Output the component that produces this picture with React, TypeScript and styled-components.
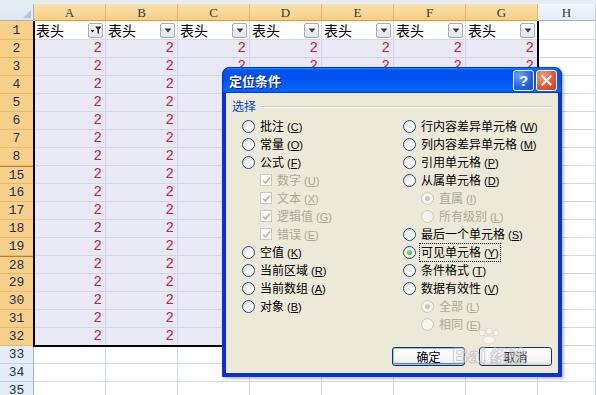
import React from 'react'
import styled, { createGlobalStyle, css } from 'styled-components'

const GlobalStyle = createGlobalStyle`
  html, body { margin: 0; padding: 0; background: #fff; overflow: hidden; }
`

const ROWS = [1, 2, 3, 4, 5, 6, 7, 8, 15, 16, 17, 18, 19, 28, 29, 30, 31, 32, 33, 34, 35]
const COLS = ['A', 'B', 'C', 'D', 'E', 'F', 'G']

const leftItems = [
  { kind: 'radio', label: '批注', key: 'C' },
  { kind: 'radio', label: '常量', key: 'O' },
  { kind: 'radio', label: '公式', key: 'F' },
  { kind: 'check', label: '数字', key: 'U', sub: true },
  { kind: 'check', label: '文本', key: 'X', sub: true },
  { kind: 'check', label: '逻辑值', key: 'G', sub: true },
  { kind: 'check', label: '错误', key: 'E', sub: true },
  { kind: 'radio', label: '空值', key: 'K' },
  { kind: 'radio', label: '当前区域', key: 'R' },
  { kind: 'radio', label: '当前数组', key: 'A' },
  { kind: 'radio', label: '对象', key: 'B' },
]

const rightItems = [
  { kind: 'radio', label: '行内容差异单元格', key: 'W' },
  { kind: 'radio', label: '列内容差异单元格', key: 'M' },
  { kind: 'radio', label: '引用单元格', key: 'P' },
  { kind: 'radio', label: '从属单元格', key: 'D' },
  { kind: 'radio', label: '直属', key: 'I', sub: true, dot: true },
  { kind: 'radio', label: '所有级别', key: 'L', sub: true },
  { kind: 'radio', label: '最后一个单元格', key: 'S' },
  { kind: 'radio', label: '可见单元格', key: 'Y', checked: true },
  { kind: 'radio', label: '条件格式', key: 'T' },
  { kind: 'radio', label: '数据有效性', key: 'V' },
  { kind: 'radio', label: '全部', key: 'L', sub: true, dot: true },
  { kind: 'radio', label: '相同', key: 'E', sub: true },
]

type Item = { kind: string; label: string; key: string; sub?: boolean; dot?: boolean; checked?: boolean }

const App = () => {
  return (
    <Sheet>
      <GlobalStyle />
      <Strip />
      <Grid>
        <Corner $r={1} $c={1}>
          <svg width="8" height="8" viewBox="0 0 8 8">
            <path d="M8 0 L8 8 L0 8 Z" fill="#b6c5d8" />
          </svg>
        </Corner>
        {COLS.map((c, i) => (
          <ColHead key={c} $r={1} $c={i + 2} $selected>{c}</ColHead>
        ))}
        <ColHead $r={1} $c={9}>H</ColHead>

        {ROWS.map((r, ri) => {
          const sel = r <= 32
          const gr = ri + 2
          return (
            <React.Fragment key={r}>
              <RowHead $r={gr} $c={1} $selected={sel} $gap={r === 15 || r === 28}>{r}</RowHead>
              {COLS.map((c, i) =>
                r === 1 ? (
                  <TitleCell key={c} $r={gr} $c={i + 2}>
                    <span>表头</span>
                    <DropButton>
                      {i === 0 ? (
                        <svg width="12" height="10" viewBox="0 0 12 10">
                          <path d="M0.5 5 L4.5 5 L2.5 7.5 Z" fill="#222" />
                          <path d="M5 1.5 L11.5 1.5 L9 4.5 L9 9 L7.5 8 L7.5 4.5 Z" fill="#222" />
                        </svg>
                      ) : (
                        <svg width="8" height="5" viewBox="0 0 8 5">
                          <path d="M0.5 0.5 L7.5 0.5 L4 4.5 Z" fill="#2a3a5a" />
                        </svg>
                      )}
                    </DropButton>
                  </TitleCell>
                ) : (
                  <Cell key={c} $r={gr} $c={i + 2} $selected={sel}>{sel ? '2' : ''}</Cell>
                )
              )}
              <Cell $r={gr} $c={9} />
            </React.Fragment>
          )
        })}
        <Selection />
      </Grid>

      <Dialog>
        <TitleBar>
          <Title>定位条件</Title>
          <CaptionButton $tone="help">?</CaptionButton>
          <CaptionButton $tone="close">
            <svg width="11" height="11" viewBox="0 0 11 11">
              <path d="M1.5 1.5 L9.5 9.5 M9.5 1.5 L1.5 9.5" stroke="#fff" strokeWidth="2" strokeLinecap="square" />
            </svg>
          </CaptionButton>
        </TitleBar>
        <Body>
          <GroupHead>
            <GroupLabel>选择</GroupLabel>
            <GroupLine />
          </GroupHead>
          <Columns>
            <Column>
              {leftItems.map((it, i) => (
                <Option key={i} item={it} />
              ))}
            </Column>
            <Column>
              {rightItems.map((it, i) => (
                <Option key={i} item={it} />
              ))}
            </Column>
          </Columns>
          <Buttons>
            <Button $default>确定</Button>
            <Button>取消</Button>
          </Buttons>
        </Body>
      </Dialog>

      <Watermark>
        <svg width="30" height="16" viewBox="0 0 30 16">
          <circle cx="8" cy="5" r="3" fill="#fff" stroke="#ccc" />
          <circle cx="15" cy="3" r="3" fill="#fff" stroke="#ccc" />
          <circle cx="22" cy="5" r="3" fill="#fff" stroke="#ccc" />
          <ellipse cx="15" cy="12" rx="6" ry="4" fill="#fff" stroke="#ccc" />
        </svg>
        <MarkText>Bai<small>经验</small></MarkText>
      </Watermark>
    </Sheet>
  )
}

const Option = ({ item }: { item: Item }) => {
  const disabled = !!item.sub
  return (
    <OptionRow $sub={disabled} $disabled={disabled}>
      {item.kind === 'radio' ? (
        <Radio $disabled={disabled}>
          {item.checked && <Dot />}
          {item.dot && <GrayDot />}
        </Radio>
      ) : (
        <Check>
          <svg width="9" height="9" viewBox="0 0 9 9">
            <path d="M1 4.5 L3.5 7 L8 1.5" stroke="#b7b49f" strokeWidth="1.6" fill="none" />
          </svg>
        </Check>
      )}
      <OptionLabel $focus={item.checked}>
        {item.label}
        <Acc>
          (<u>{item.key}</u>)
        </Acc>
      </OptionLabel>
    </OptionRow>
  )
}

export default App

const Sheet = styled.div`
  position: relative;
  width: 596px;
  height: 395px;
  overflow: hidden;
  background: #fff;
`

const Strip = styled.div`
  height: 4px;
  background: #e6ecf4;
`

const Grid = styled.div`
  display: grid;
  grid-template-columns: 34px repeat(7, 72px) 1fr;
  grid-template-rows: 17px 19px repeat(20, 18px);
`

type At = { $r: number; $c: number }

const place = css<At>`
  grid-row: ${(p) => p.$r};
  grid-column: ${(p) => p.$c};
`

const headBase = css`
  box-sizing: border-box;
  display: flex;
  align-items: center;
  justify-content: center;
  color: #27413e;
`

const Corner = styled.div<At>`
  ${place}
  ${headBase}
  justify-content: flex-end;
  align-items: flex-end;
  padding: 0 2px 2px 0;
  background: linear-gradient(#e8eef6, #dce5f1);
  border-right: 1px solid #9eb6ce;
  border-bottom: 1px solid #9eb6ce;
`

const ColHead = styled.div<At & { $selected?: boolean }>`
  ${place}
  ${headBase}
  font-family: "Liberation Serif", serif;
  font-size: 13px;
  padding-top: 1px;
  border-right: 1px solid ${(p) => (p.$selected ? '#e8b870' : '#c5d1df')};
  border-bottom: 1px solid ${(p) => (p.$selected ? '#f29536' : '#9eb6ce')};
  background: ${(p) => (p.$selected ? 'linear-gradient(#fbe0ac, #f7cf85)' : 'linear-gradient(#f3f6fb, #e4ecf7)')};
`

const RowHead = styled.div<At & { $selected?: boolean; $gap?: boolean }>`
  ${place}
  ${headBase}
  font-family: "Liberation Mono", monospace;
  font-size: 13px;
  color: #1f2f55;
  border-right: 1px solid ${(p) => (p.$selected ? '#f29536' : '#9eb6ce')};
  border-bottom: 1px solid ${(p) => (p.$selected ? '#e8b870' : '#c5d1df')};
  border-top: ${(p) => (p.$gap ? '1px solid #c07a2a' : '0')};
  background: ${(p) => (p.$selected ? '#f9d08a' : '#e4ecf7')};
`

const Cell = styled.div<At & { $selected?: boolean }>`
  ${place}
  box-sizing: border-box;
  display: flex;
  align-items: center;
  justify-content: flex-end;
  padding: 0 3px 1px 0;
  font-family: "Liberation Mono", monospace;
  font-size: 14px;
  color: #c3213f;
  background: ${(p) => (p.$selected ? '#e9e9f5' : '#fff')};
  border-right: 1px solid #d0d7e5;
  border-bottom: 1px solid #d0d7e5;
`

const TitleCell = styled.div<At>`
  ${place}
  box-sizing: border-box;
  display: flex;
  align-items: center;
  justify-content: space-between;
  padding: 0 2px 0 2px;
  background: #fff;
  border-right: 1px solid #d0d7e5;
  border-bottom: 1px solid #d0d7e5;
  font-family: "Noto Sans CJK SC", sans-serif;
  font-size: 14px;
  line-height: 1;
  color: #000;
  white-space: nowrap;
`

const DropButton = styled.div`
  box-sizing: border-box;
  width: 15px;
  height: 15px;
  display: flex;
  align-items: center;
  justify-content: center;
  border: 1px solid #a7abb3;
  border-radius: 2px;
  background: linear-gradient(#fdfdfe, #dfe3ea);
`

const Selection = styled.div`
  grid-column: 2 / 9;
  grid-row: 2 / 20;
  border: 2px solid #000;
  border-top-width: 0;
  margin: 0 -1px -1px -1px;
  pointer-events: none;
`

const Dialog = styled.div`
  position: absolute;
  left: 222px;
  top: 67px;
  width: 340px;
  height: 310px;
  box-sizing: border-box;
  display: flex;
  flex-direction: column;
  background: #0831d9;
  border: 1px solid #0831d9;
  border-radius: 7px 7px 0 0;
  box-shadow: 2px 2px 3px rgba(0, 0, 0, 0.25);
  font-family: "Noto Sans CJK SC", sans-serif;
  font-size: 12px;
`

const TitleBar = styled.div`
  height: 25px;
  display: flex;
  align-items: center;
  gap: 2px;
  padding: 0 4px 0 6px;
  border-radius: 6px 6px 0 0;
  background: linear-gradient(
    180deg,
    #0997ff 0%,
    #0053ee 8%,
    #0050ee 40%,
    #0066ff 88%,
    #0066ff 93%,
    #005bff 95%,
    #003dd7 96%,
    #003dd7 100%
  );
`

const Title = styled.div`
  flex: 1;
  color: #fff;
  font-weight: bold;
  font-size: 13px;
  text-shadow: 1px 1px #0f1089;
`

const CaptionButton = styled.div<{ $tone: 'help' | 'close' }>`
  box-sizing: border-box;
  width: 21px;
  height: 21px;
  display: flex;
  align-items: center;
  justify-content: center;
  border: 1px solid #fff;
  border-radius: 3px;
  color: #fff;
  font-family: "Liberation Sans", sans-serif;
  font-weight: bold;
  font-size: 15px;
  background: ${(p) =>
    p.$tone === 'help'
      ? 'radial-gradient(circle at 30% 25%, #6fa4ff, #2163e6 60%, #1550d0)'
      : 'radial-gradient(circle at 30% 25%, #f59c7e, #e1532f 60%, #c6401f)'};
`

const Body = styled.div`
  flex: 1;
  margin: 0 3px 3px 3px;
  padding: 6px 6px 7px 6px;
  background: #ece9d8;
  display: flex;
  flex-direction: column;
`

const GroupHead = styled.div`
  height: 14px;
  display: flex;
  align-items: center;
  gap: 5px;
`

const GroupLabel = styled.div`
  color: #0046d5;
  font-size: 12px;
  line-height: 14px;
`

const GroupLine = styled.div`
  flex: 1;
  margin-top: 2px;
  border-top: 1px solid #d0d0bf;
  border-bottom: 1px solid #fff;
`

const Columns = styled.div`
  display: grid;
  grid-template-columns: 161px 1fr;
  margin-top: 4px;
  padding-left: 10px;
`

const Column = styled.div`
  display: flex;
  flex-direction: column;
`

const OptionRow = styled.div<{ $sub?: boolean; $disabled?: boolean }>`
  height: 18px;
  display: flex;
  align-items: center;
  gap: 3px;
  padding-left: ${(p) => (p.$sub ? '18px' : '0')};
  color: ${(p) => (p.$disabled ? '#aca899' : '#000')};
  white-space: nowrap;
`

const Radio = styled.div<{ $disabled?: boolean }>`
  box-sizing: border-box;
  width: 13px;
  height: 13px;
  flex-shrink: 0;
  border-radius: 50%;
  display: flex;
  align-items: center;
  justify-content: center;
  border: 1px solid ${(p) => (p.$disabled ? '#cac8bb' : '#1c5180')};
  background: ${(p) => (p.$disabled ? '#f4f3ee' : 'linear-gradient(135deg, #dcdcd5, #fff 70%)')};
`

const Dot = styled.div`
  width: 5px;
  height: 5px;
  border-radius: 50%;
  background: radial-gradient(circle at 35% 35%, #8ee88b, #21a121);
`

const GrayDot = styled.div`
  width: 5px;
  height: 5px;
  border-radius: 50%;
  background: #cac8bb;
`

const Check = styled.div`
  box-sizing: border-box;
  width: 12px;
  height: 12px;
  flex-shrink: 0;
  display: flex;
  align-items: center;
  justify-content: center;
  border: 1px solid #cac8bb;
  background: #fff;
`

const OptionLabel = styled.span<{ $focus?: boolean }>`
  box-sizing: border-box;
  padding: 0 1px;
  line-height: 15px;
  border: 1px dotted ${(p) => (p.$focus ? '#000' : 'transparent')};
`

const Acc = styled.span`
  margin-left: 3px;
  font-family: "Liberation Sans", sans-serif;
  font-size: 11px;
`

const Buttons = styled.div`
  margin-top: auto;
  display: flex;
  justify-content: flex-end;
  gap: 14px;
`

const Button = styled.div<{ $default?: boolean }>`
  box-sizing: border-box;
  width: 73px;
  height: 19px;
  display: flex;
  align-items: center;
  justify-content: center;
  border: 1px solid #003c74;
  border-radius: 3px;
  color: #000;
  font-size: 12px;
  background: linear-gradient(#fff, #f3f3ef 80%, #d6d0c5);
  box-shadow: ${(p) => (p.$default ? 'inset 0 0 0 1px #9db9eb, inset 0 -1px 0 1px #6685d6' : 'none')};
`

const Watermark = styled.div`
  position: absolute;
  left: 452px;
  top: 328px;
  display: flex;
  flex-direction: column;
  align-items: center;
  opacity: 0.55;
  pointer-events: none;
`

const MarkText = styled.div`
  margin-top: -2px;
  font-family: "Liberation Sans", sans-serif;
  font-weight: bold;
  font-size: 22px;
  color: #fff;
  -webkit-text-stroke: 1px #aaa;
  small {
    font-family: "Noto Sans CJK SC", sans-serif;
    font-size: 18px;
    margin-left: 4px;
  }
`
